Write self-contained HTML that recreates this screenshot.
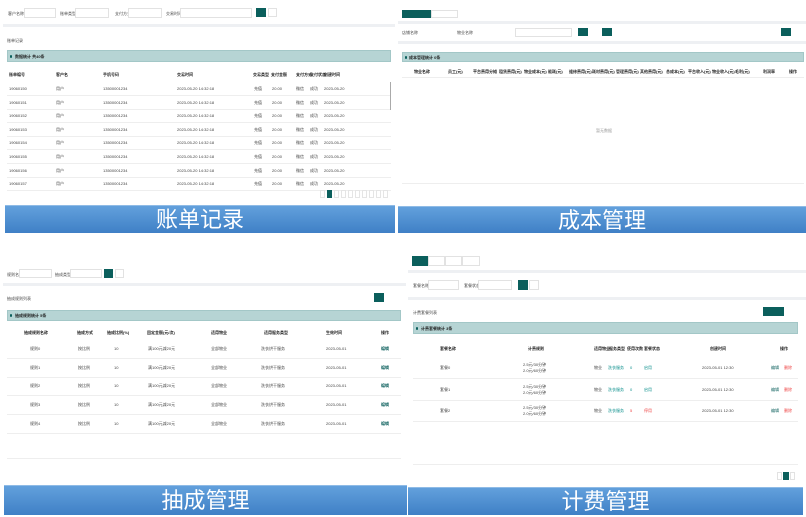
<!DOCTYPE html>
<html><head><meta charset="utf-8"><style>
*{margin:0;padding:0;box-sizing:border-box}
body{width:806px;height:517px;background:#fff;position:relative;overflow:hidden;font-family:"Liberation Sans","Noto Sans CJK SC",sans-serif;color:#333}
.a{position:absolute}
.t{position:absolute;font-size:4px;color:#444;white-space:nowrap;line-height:5px}
.h{font-weight:bold;color:#222}
.g{color:#999}
.bar{position:absolute;background:linear-gradient(#62a0dc,#3f80c6);color:#fff;font-size:22px;text-align:center;line-height:27px;border-top:1px solid #8fbbe6}
.teal{position:absolute;background:#b6d4d4;border:1px solid #a3c7c7}
.btn{position:absolute;background:#0b5f5c}
.box{position:absolute;border:1px solid #e2e2e2;background:#fff}
.sep{position:absolute;background:#eef0f3}
.ln{position:absolute;height:1px;background:#eee}
.dot{position:absolute;width:2px;height:3px;background:#0b5f5c;border-radius:1px}
</style></head><body>

<!-- Q1 -->
<div class="t" style="left:8px;top:11px">客户名称</div>
<div class="box" style="left:24px;top:8px;width:32px;height:10px"></div>
<div class="t" style="left:60px;top:11px">账单类型</div>
<div class="box" style="left:75px;top:8px;width:34px;height:10px"></div>
<div class="t" style="left:115px;top:11px">支付方式</div>
<div class="box" style="left:128px;top:8px;width:34px;height:10px"></div>
<div class="t" style="left:166px;top:11px">交易时间</div>
<div class="box" style="left:180px;top:8px;width:72px;height:10px"></div>
<div class="btn" style="left:256px;top:8px;width:10px;height:9px"></div>
<div class="box" style="left:268px;top:8px;width:9px;height:9px"></div>
<div class="sep" style="left:3px;top:24px;width:392px;height:3px"></div>
<div class="t" style="left:7px;top:38px">账单记录</div>
<div class="teal" style="left:7px;top:50px;width:384px;height:12px"></div>
<div class="dot" style="left:10px;top:55px"></div>
<div class="t h" style="left:15px;top:54px">数据统计 共40条</div>
<div class="t h" style="left:9px;top:72px">账单编号</div>
<div class="t h" style="left:56px;top:72px">客户名</div>
<div class="t h" style="left:103px;top:72px">手机号码</div>
<div class="t h" style="left:177px;top:72px">交易时间</div>
<div class="t h" style="left:253px;top:72px">交易类型</div>
<div class="t h" style="left:271px;top:72px">支付金额</div>
<div class="t h" style="left:296px;top:72px">支付方式</div>
<div class="t h" style="left:310px;top:72px">支付状态</div>
<div class="t h" style="left:324px;top:72px">创建时间</div>
<div id="q1rows"></div>
<div class="a" style="left:390px;top:82px;width:1px;height:28px;background:#aaa"></div>
<div class="a" style="left:320px;top:190px;width:70px;height:8px;display:flex;gap:2px">
<span style="width:5px;border:1px solid #e5e5e5"></span><span style="width:5px;background:#0b5f5c"></span><span style="width:5px;border:1px solid #e5e5e5"></span><span style="width:5px;border:1px solid #e5e5e5"></span><span style="width:5px;border:1px solid #e5e5e5"></span><span style="width:5px;border:1px solid #e5e5e5"></span><span style="width:5px;border:1px solid #e5e5e5"></span><span style="width:5px;border:1px solid #e5e5e5"></span><span style="width:5px;border:1px solid #e5e5e5"></span><span style="width:5px;border:1px solid #e5e5e5"></span>
</div>
<div class="bar" style="left:5px;top:205px;width:390px;height:28px">账单记录</div>

<!-- Q2 -->
<div class="btn" style="left:402px;top:10px;width:29px;height:8px"></div>
<div class="box" style="left:431px;top:10px;width:27px;height:8px"></div>
<div class="sep" style="left:398px;top:21px;width:408px;height:3px"></div>
<div class="t" style="left:402px;top:30px">店铺名称</div>
<div class="t" style="left:457px;top:30px">物业名称</div>
<div class="box" style="left:515px;top:28px;width:57px;height:9px"></div>
<div class="btn" style="left:578px;top:28px;width:10px;height:8px"></div>
<div class="btn" style="left:602px;top:28px;width:10px;height:8px"></div>
<div class="btn" style="left:781px;top:28px;width:10px;height:8px"></div>
<div class="sep" style="left:398px;top:41px;width:408px;height:3px"></div>
<div class="teal" style="left:402px;top:52px;width:402px;height:10px"></div>
<div class="dot" style="left:405px;top:56px"></div>
<div class="t h" style="left:409px;top:55px">成本管理统计 0条</div>
<div class="t h" style="left:414px;top:69px">物业名称</div>
<div class="t h" style="left:448px;top:69px">员工(元)</div>
<div class="t h" style="left:473px;top:69px">平台费用分摊</div>
<div class="t h" style="left:499px;top:69px">租赁费用(元)</div>
<div class="t h" style="left:524px;top:69px">物业成本(元)</div>
<div class="t h" style="left:548px;top:69px">能耗(元)</div>
<div class="t h" style="left:569px;top:69px">维修费用(元)</div>
<div class="t h" style="left:592px;top:69px">耗材费用(元)</div>
<div class="t h" style="left:616px;top:69px">管理费用(元)</div>
<div class="t h" style="left:640px;top:69px">其他费用(元)</div>
<div class="t h" style="left:666px;top:69px">总成本(元)</div>
<div class="t h" style="left:688px;top:69px">平台收入(元)</div>
<div class="t h" style="left:712px;top:69px">物业收入(元)</div>
<div class="t h" style="left:735px;top:69px">毛利(元)</div>
<div class="t h" style="left:763px;top:69px">利润率</div>
<div class="t h" style="left:789px;top:69px">操作</div>
<div class="ln" style="left:402px;top:77px;width:402px"></div>
<div class="t g" style="left:596px;top:128px">暂无数据</div>
<div class="ln" style="left:402px;top:183px;width:402px"></div>
<div class="bar" style="left:398px;top:206px;width:408px;height:27px">成本管理</div>

<!-- Q3 -->
<div class="t" style="left:7px;top:272px">规则名</div>
<div class="box" style="left:19px;top:269px;width:33px;height:9px"></div>
<div class="t" style="left:55px;top:272px">抽成类型</div>
<div class="box" style="left:70px;top:269px;width:32px;height:9px"></div>
<div class="btn" style="left:104px;top:269px;width:9px;height:9px"></div>
<div class="box" style="left:115px;top:269px;width:9px;height:9px"></div>
<div class="sep" style="left:3px;top:283px;width:403px;height:3px"></div>
<div class="t" style="left:7px;top:296px">抽成规则列表</div>
<div class="btn" style="left:374px;top:293px;width:10px;height:9px"></div>
<div class="teal" style="left:7px;top:310px;width:394px;height:11px"></div>
<div class="dot" style="left:10px;top:314px"></div>
<div class="t h" style="left:15px;top:313px">抽成规则统计 5条</div>
<div class="t h" style="left:24px;top:330px">抽成规则名称</div>
<div class="t h" style="left:77px;top:330px">抽成方式</div>
<div class="t h" style="left:107px;top:330px">抽成比例(%)</div>
<div class="t h" style="left:147px;top:330px">固定金额(元/次)</div>
<div class="t h" style="left:211px;top:330px">适用物业</div>
<div class="t h" style="left:264px;top:330px">适用服务类型</div>
<div class="t h" style="left:326px;top:330px">生效时间</div>
<div class="t h" style="left:381px;top:330px">操作</div>
<div id="q3rows"></div>
<div class="ln" style="left:7px;top:458px;width:394px"></div>
<div class="bar" style="left:4px;top:485px;width:403px;height:30px;line-height:30px">抽成管理</div>

<!-- Q4 -->
<div class="btn" style="left:412px;top:256px;width:16px;height:10px"></div>
<div class="box" style="left:428px;top:256px;width:17px;height:10px"></div>
<div class="box" style="left:445px;top:256px;width:17px;height:10px"></div>
<div class="box" style="left:462px;top:256px;width:18px;height:10px"></div>
<div class="sep" style="left:408px;top:270px;width:398px;height:3px"></div>
<div class="t" style="left:413px;top:283px">套餐名称</div>
<div class="box" style="left:428px;top:280px;width:31px;height:10px"></div>
<div class="t" style="left:464px;top:283px">套餐状态</div>
<div class="box" style="left:478px;top:280px;width:34px;height:10px"></div>
<div class="btn" style="left:518px;top:280px;width:10px;height:10px"></div>
<div class="box" style="left:529px;top:280px;width:10px;height:10px"></div>
<div class="sep" style="left:408px;top:297px;width:398px;height:3px"></div>
<div class="t" style="left:413px;top:310px">计费套餐列表</div>
<div class="btn" style="left:763px;top:307px;width:21px;height:9px"></div>
<div class="teal" style="left:413px;top:322px;width:385px;height:12px"></div>
<div class="dot" style="left:416px;top:327px"></div>
<div class="t h" style="left:421px;top:326px">计费套餐统计 3条</div>
<div class="t h" style="left:440px;top:346px">套餐名称</div>
<div class="t h" style="left:528px;top:346px">计费规则</div>
<div class="t h" style="left:594px;top:346px">适用物业</div>
<div class="t h" style="left:609px;top:346px">服务类型</div>
<div class="t h" style="left:627px;top:346px">使用次数</div>
<div class="t h" style="left:644px;top:346px">套餐状态</div>
<div class="t h" style="left:710px;top:346px">创建时间</div>
<div class="t h" style="left:780px;top:346px">操作</div>
<div id="q4rows"></div>
<div class="ln" style="left:413px;top:464px;width:385px"></div>
<div class="box" style="left:777px;top:472px;width:5px;height:8px"></div>
<div class="btn" style="left:783px;top:472px;width:6px;height:8px"></div>
<div class="box" style="left:790px;top:472px;width:5px;height:8px"></div>
<div class="bar" style="left:408px;top:487px;width:395px;height:28px">计费管理</div>

<script>
var h='';
for(var i=0;i<8;i++){var y=86+i*13.6;
h+='<div class="t" style="left:9px;top:'+y+'px">1906015'+i+'</div><div class="t" style="left:56px;top:'+y+'px">用户</div><div class="t" style="left:103px;top:'+y+'px">13500001234</div><div class="t" style="left:177px;top:'+y+'px">2023-05-20 14:32:18</div><div class="t" style="left:254px;top:'+y+'px">充值</div><div class="t" style="left:272px;top:'+y+'px">20.00</div><div class="t" style="left:296px;top:'+y+'px">微信</div><div class="t" style="left:310px;top:'+y+'px">成功</div><div class="t" style="left:324px;top:'+y+'px">2023-05-20</div><div class="ln" style="left:7px;top:'+(y+9)+'px;width:384px"></div>';}
document.getElementById('q1rows').innerHTML=h;
h='';
for(i=0;i<5;i++){var y=346+i*18.7;
h+='<div class="t" style="left:30px;top:'+y+'px">规则'+i+'</div><div class="t" style="left:78px;top:'+y+'px">按比例</div><div class="t" style="left:114px;top:'+y+'px">10</div><div class="t" style="left:148px;top:'+y+'px">满100元减20元</div><div class="t" style="left:211px;top:'+y+'px">全部物业</div><div class="t" style="left:261px;top:'+y+'px">洗衣烘干服务</div><div class="t" style="left:326px;top:'+y+'px">2023-05-01</div><div class="t" style="left:381px;top:'+y+'px;color:#0b5f5c;font-weight:bold">编辑</div><div class="ln" style="left:7px;top:'+(y+12)+'px;width:394px"></div>';}
document.getElementById('q3rows').innerHTML=h;
h='';
for(i=0;i<3;i++){var y=362+i*21.5;
h+='<div class="t" style="left:440px;top:'+(y+3)+'px">套餐'+i+'</div><div class="t" style="left:523px;top:'+y+'px">2.5元/30分钟</div><div class="t" style="left:523px;top:'+(y+6)+'px">2.0元/60分钟</div><div class="t" style="left:594px;top:'+(y+3)+'px">物业</div><div class="t" style="left:608px;top:'+(y+3)+'px;color:#0b8f8c">洗衣服务</div><div class="t" style="left:630px;top:'+(y+3)+'px;color:'+(i==2?'#e44':'#0b8f8c')+'">'+(i==2?'5':'0')+'</div><div class="t" style="left:644px;top:'+(y+3)+'px;color:'+(i==2?'#e44':'#0b8f8c')+'">'+(i==2?'停用':'启用')+'</div><div class="t" style="left:702px;top:'+(y+3)+'px">2023-05-01 12:30</div><div class="t" style="left:771px;top:'+(y+3)+'px;color:#0b5f5c">编辑</div><div class="t" style="left:784px;top:'+(y+3)+'px;color:#e44">删除</div><div class="ln" style="left:413px;top:'+(y+16)+'px;width:385px"></div>';}
document.getElementById('q4rows').innerHTML=h;
</script>
</body></html>
